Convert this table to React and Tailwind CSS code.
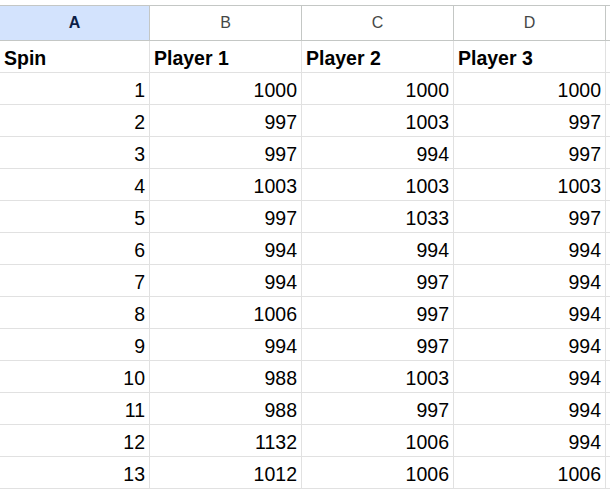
const rows = [
  [1, 1000, 1000, 1000],
  [2, 997, 1003, 997],
  [3, 997, 994, 997],
  [4, 1003, 1003, 1003],
  [5, 997, 1033, 997],
  [6, 994, 994, 994],
  [7, 994, 997, 994],
  [8, 1006, 997, 994],
  [9, 994, 997, 994],
  [10, 988, 1003, 994],
  [11, 988, 997, 994],
  [12, 1132, 1006, 994],
  [13, 1012, 1006, 1006],
];

const widths = ["w-[150px]", "w-[152px]", "w-[152px]", "w-[152px]"];

export default function App() {
  return (
    <div className="w-[610px] h-[492px] overflow-hidden bg-white font-['Liberation_Sans',Arial,sans-serif] text-black">
      {/* top strip */}
      <div className="h-[6px] border-b border-[#c4c7c5]" />

      {/* column letters */}
      <div className="flex h-[35px] border-b border-[#c4c7c5]">
        {["A", "B", "C", "D"].map((l, i) => (
          <div
            key={l}
            className={`${widths[i]} shrink-0 flex items-center justify-center border-r border-[#c4c7c5] text-[16px] ${
              i === 0 ? "bg-[#d3e3fd] font-bold text-[#0b1e46]" : "text-[#444746]"
            }`}
          >
            {l}
          </div>
        ))}
        <div className="flex-1" />
      </div>

      {/* header row */}
      <div className="flex h-[32px] border-b border-[#e1e1e1]">
        {["Spin", "Player 1", "Player 2", "Player 3"].map((t, i) => (
          <div
            key={t}
            className={`${widths[i]} shrink-0 flex items-center pl-[4px] pt-[4px] border-r border-[#e1e1e1] text-[19.5px] font-bold`}
          >
            {t}
          </div>
        ))}
        <div className="flex-1" />
      </div>

      {rows.map((r) => (
        <div key={r[0]} className="flex h-[32px] border-b border-[#e1e1e1]">
          {r.map((v, i) => (
            <div
              key={i}
              className={`${widths[i]} shrink-0 flex items-center justify-end pr-[4px] pt-[4px] border-r border-[#e1e1e1] text-[19.5px]`}
            >
              {v}
            </div>
          ))}
          <div className="flex-1" />
        </div>
      ))}
    </div>
  );
}
